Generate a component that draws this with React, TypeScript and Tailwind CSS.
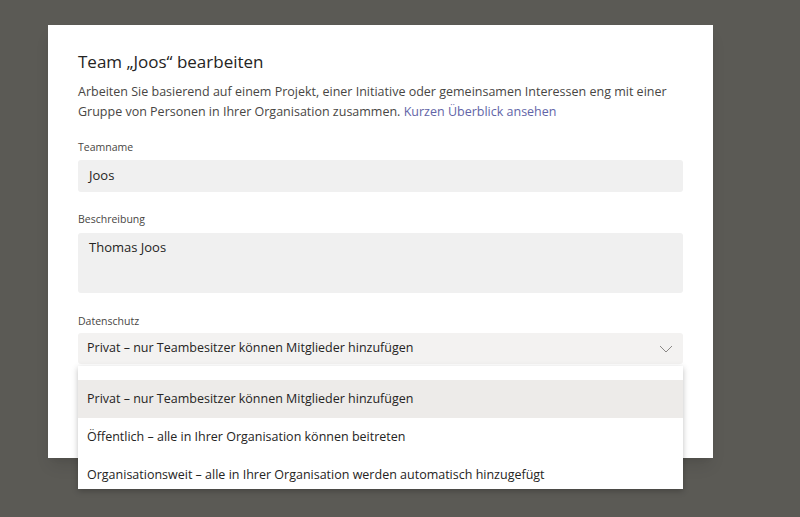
import React from "react";

const options = [
  "Privat – nur Teambesitzer können Mitglieder hinzufügen",
  "Öffentlich – alle in Ihrer Organisation können beitreten",
  "Organisationsweit – alle in Ihrer Organisation werden automatisch hinzugefügt",
];

export default function App() {
  return (
    <div
      className="h-[517px] w-[800px] overflow-hidden bg-[#5b5a55] pt-[25px] pl-[48px]"
      style={{ fontFamily: '"Open Sans", "Noto Sans", sans-serif' }}
    >
      <div className="relative h-[433px] w-[665px] bg-white px-[30px] pt-[26px] text-[#252423] shadow-lg">
        <h1 className="text-[17px] leading-[22px] font-normal">Team „Joos“ bearbeiten</h1>
        <p className="mt-[9px] text-[12.5px] leading-[19.5px] text-[#484644]">
          Arbeiten Sie basierend auf einem Projekt, einer Initiative oder gemeinsamen Interessen eng mit einer
          Gruppe von Personen in Ihrer Organisation zusammen.{" "}
          <span className="text-[#6264a7]">Kurzen Überblick ansehen</span>
        </p>

        {/* Teamname */}
        <label className="mt-[19px] block text-[10.5px] leading-[14px] text-[#484644]">Teamname</label>
        <div className="mt-[6px] flex h-[32px] items-center rounded-[3px] bg-[#f0f0f0] px-[11px] text-[13px] text-[#252423]">
          Joos
        </div>

        {/* Beschreibung */}
        <label className="mt-[20px] block text-[10.5px] leading-[14px] text-[#484644]">Beschreibung</label>
        <div className="mt-[7px] h-[60px] rounded-[3px] bg-[#f0f0f0] px-[11px] pt-[5px] text-[13px] text-[#252423]">
          Thomas Joos
        </div>

        {/* Datenschutz */}
        <label className="mt-[21px] block text-[10.5px] leading-[14px] text-[#484644]">Datenschutz</label>
        <div className="mt-[5px] flex h-[31px] items-center justify-between rounded-[3px] bg-[#f3f2f1] pr-[10px] pl-[9px] text-[12.5px] text-[#252423]">
          <span>{options[0]}</span>
          <svg width="14" height="8" viewBox="0 0 14 8" fill="none" stroke="#8a8886" strokeWidth="1">
            <path d="M1 1l6 6 6-6" />
          </svg>
        </div>

        {/* open dropdown list */}
        <ul className="absolute top-[341px] left-[30px] z-10 w-[605px] bg-white pt-[14px] text-[12.5px] text-[#252423] shadow-[0_2px_6px_rgba(0,0,0,0.25)]">
          {options.map((o, i) => (
            <li
              key={o}
              className={`flex items-center px-[9px] ${i === 0 ? "h-[38px] bg-[#edebe9]" : ""} ${i === 1 ? "h-[38px]" : ""} ${i === 2 ? "h-[33px] pt-[5px]" : ""}`}
            >
              {o}
            </li>
          ))}
        </ul>
      </div>
    </div>
  );
}
